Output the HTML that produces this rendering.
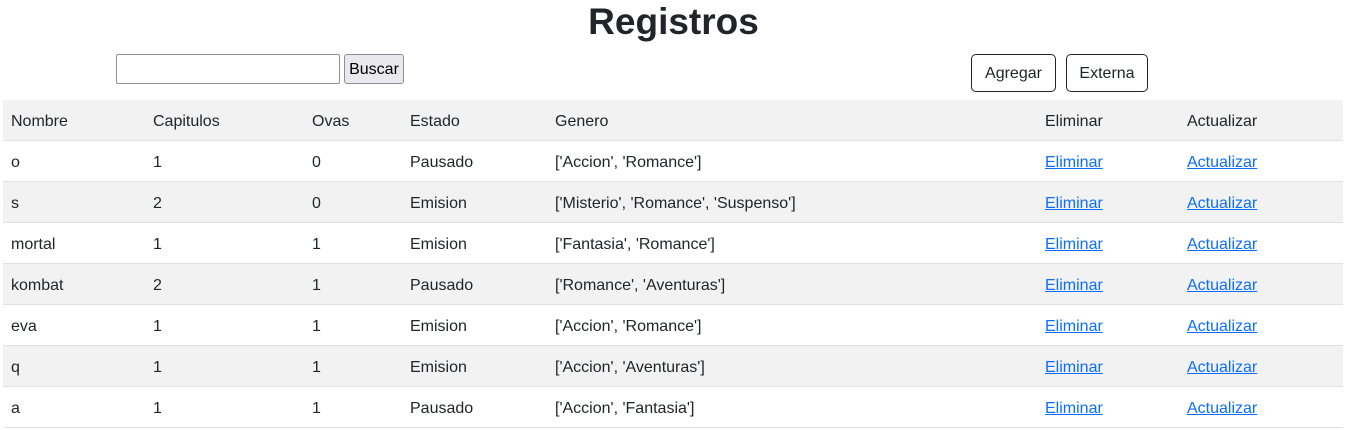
<!DOCTYPE html>
<html><head><meta charset="utf-8"><style>
*{box-sizing:border-box;margin:0;padding:0}
body{width:1347px;height:430px;background:#fff;font-family:"Liberation Sans",sans-serif;color:#212529;position:relative;overflow:hidden;font-size:16px}
h1{position:absolute;top:0;left:0;width:1347px;text-align:center;font-size:37px;font-weight:bold;line-height:44px;color:#212529}
.inp{position:absolute;left:116px;top:54px;width:224px;height:30px;border:1px solid #8f8d9a;border-radius:2px}
.bb{position:absolute;left:344px;top:54px;width:60px;height:30px;border:1px solid #8f8d9a;border-radius:3px;background:#e9e9ed;text-align:center;line-height:30px;color:#000}
.ob{position:absolute;top:54px;height:38px;border:1px solid #212529;border-radius:5px;text-align:center;line-height:38px}
.row{position:absolute;left:3px;width:1340px;height:41px;border-bottom:1px solid #dee2e6}
.row span{position:absolute;top:2px;line-height:40px;white-space:nowrap}
.g{background:#f2f2f2}
a{color:#0d6efd;text-decoration:underline}
</style></head><body>
<h1>Registros</h1>
<div class="inp"></div><div class="bb">Buscar</div>
<div class="ob" style="left:971px;width:85px">Agregar</div>
<div class="ob" style="left:1066px;width:82px">Externa</div>
<div class="row g" style="top:100px"><span style="left:8px">Nombre</span><span style="left:150px">Capitulos</span><span style="left:309px">Ovas</span><span style="left:407px">Estado</span><span style="left:552px">Genero</span><span style="left:1042px">Eliminar</span><span style="left:1184px">Actualizar</span></div>
<div class="row" style="top:141px"><span style="left:8px">o</span><span style="left:150px">1</span><span style="left:309px">0</span><span style="left:407px">Pausado</span><span style="left:552px">['Accion', 'Romance']</span><span style="left:1042px"><a>Eliminar</a></span><span style="left:1184px"><a>Actualizar</a></span></div>
<div class="row g" style="top:182px"><span style="left:8px">s</span><span style="left:150px">2</span><span style="left:309px">0</span><span style="left:407px">Emision</span><span style="left:552px">['Misterio', 'Romance', 'Suspenso']</span><span style="left:1042px"><a>Eliminar</a></span><span style="left:1184px"><a>Actualizar</a></span></div>
<div class="row" style="top:223px"><span style="left:8px">mortal</span><span style="left:150px">1</span><span style="left:309px">1</span><span style="left:407px">Emision</span><span style="left:552px">['Fantasia', 'Romance']</span><span style="left:1042px"><a>Eliminar</a></span><span style="left:1184px"><a>Actualizar</a></span></div>
<div class="row g" style="top:264px"><span style="left:8px">kombat</span><span style="left:150px">2</span><span style="left:309px">1</span><span style="left:407px">Pausado</span><span style="left:552px">['Romance', 'Aventuras']</span><span style="left:1042px"><a>Eliminar</a></span><span style="left:1184px"><a>Actualizar</a></span></div>
<div class="row" style="top:305px"><span style="left:8px">eva</span><span style="left:150px">1</span><span style="left:309px">1</span><span style="left:407px">Emision</span><span style="left:552px">['Accion', 'Romance']</span><span style="left:1042px"><a>Eliminar</a></span><span style="left:1184px"><a>Actualizar</a></span></div>
<div class="row g" style="top:346px"><span style="left:8px">q</span><span style="left:150px">1</span><span style="left:309px">1</span><span style="left:407px">Emision</span><span style="left:552px">['Accion', 'Aventuras']</span><span style="left:1042px"><a>Eliminar</a></span><span style="left:1184px"><a>Actualizar</a></span></div>
<div class="row" style="top:387px"><span style="left:8px">a</span><span style="left:150px">1</span><span style="left:309px">1</span><span style="left:407px">Pausado</span><span style="left:552px">['Accion', 'Fantasia']</span><span style="left:1042px"><a>Eliminar</a></span><span style="left:1184px"><a>Actualizar</a></span></div>
</body></html>
